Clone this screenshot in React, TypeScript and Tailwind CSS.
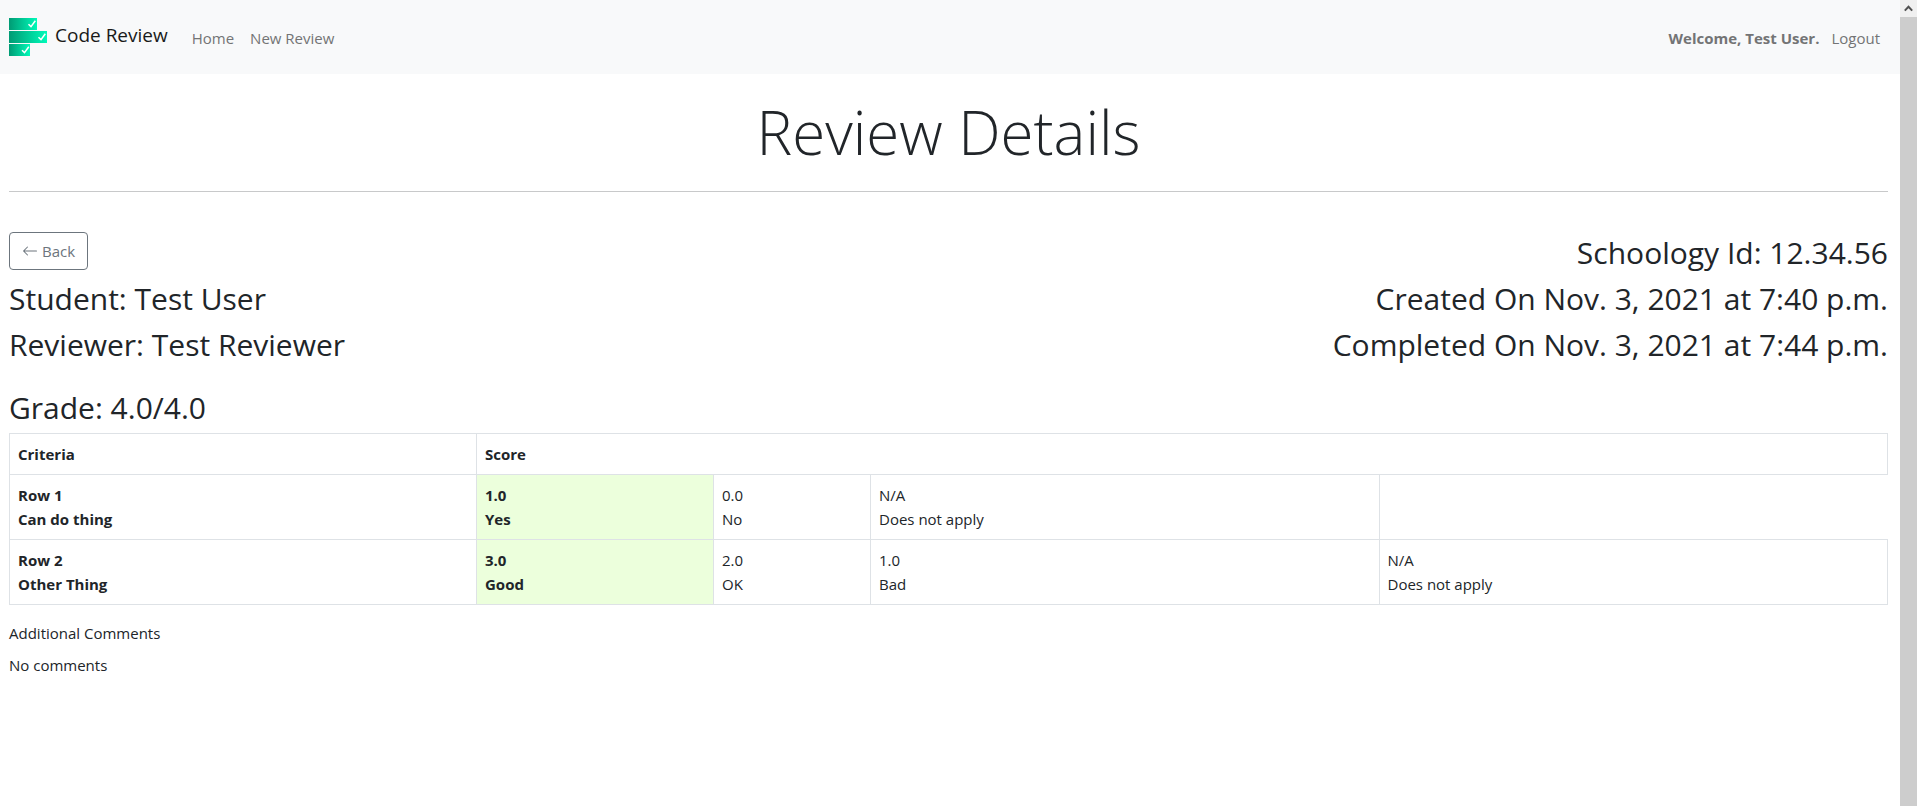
import type { ReactNode } from "react";

type Score = { points: string; label: string; selected?: boolean };
type Criterion = { name: string; description: string; scores: Score[] };

const criteria: Criterion[] = [
  {
    name: "Row 1",
    description: "Can do thing",
    scores: [
      { points: "1.0", label: "Yes", selected: true },
      { points: "0.0", label: "No" },
      { points: "N/A", label: "Does not apply" },
    ],
  },
  {
    name: "Row 2",
    description: "Other Thing",
    scores: [
      { points: "3.0", label: "Good", selected: true },
      { points: "2.0", label: "OK" },
      { points: "1.0", label: "Bad" },
      { points: "N/A", label: "Does not apply" },
    ],
  },
];

function Logo() {
  return (
    <svg width="38" height="38" viewBox="0 0 38 38" aria-hidden="true">
      <defs>
        <linearGradient id="bar" x1="0" y1="0" x2="1" y2="0">
          <stop offset="0" stopColor="#009b74" />
          <stop offset="1" stopColor="#00fab9" />
        </linearGradient>
      </defs>
      <rect x="0" y="0" width="28" height="12" fill="url(#bar)" />
      <rect x="0" y="13" width="38" height="12" fill="url(#bar)" />
      <rect x="0" y="26" width="21" height="12" fill="url(#bar)" />
      <g fill="none" stroke="#fff" strokeWidth="1.5">
        <path d="M19.5 6.2 22 8.6 26.3 2.8" />
        <path d="M29.5 19.2 32 21.6 36.3 15.8" />
        <path d="M13 32.2 15.5 34.6 19.8 28.8" />
      </g>
    </svg>
  );
}

function Heading({ children }: { children: ReactNode }) {
  return <h2 className="pb-1.5 pt-0.5 text-[30px] leading-[38px]">{children}</h2>;
}

function ScrollRail() {
  return (
    <div className="sticky top-0 flex h-screen w-[17px] shrink-0 flex-col bg-[#f0f0f0]" aria-hidden="true">
      <div className="flex h-[17px] items-center justify-center">
        <svg width="9" height="7" viewBox="0 0 9 7">
          <path d="M0.8 5.6 4.5 1.8 8.2 5.6" fill="none" stroke="#505050" strokeWidth="2" />
        </svg>
      </div>
      <div className="flex-1 bg-[#cdcdcd]" />
    </div>
  );
}

export default function App() {
  return (
    <div className="flex min-h-screen bg-white font-['Open_Sans','Noto_Sans',sans-serif] text-[15px] leading-6 text-[#212529]">
      <div className="min-w-0 flex-1">
        <nav className="flex h-[74px] items-center bg-[#f8f9fa] pl-[9px] pr-5 text-[#737475]">
          <a href="#" className="mr-6 flex items-center gap-2 text-[19px] text-[#191919]">
            <Logo />
            <span className="pb-1">Code Review</span>
          </a>
          <div className="flex flex-1 items-center gap-4 pt-0.5">
            <a href="#home">Home</a>
            <a href="#new">New Review</a>
            <strong className="ml-auto">Welcome, Test User.</strong>
            <a href="#logout" className="-ml-1">Logout</a>
          </div>
        </nav>

        <main className="pl-[9px] pr-3">
          <h1 className="border-b border-[#c8c9ca] pb-5 pt-5 text-center text-[60px] font-light leading-[77px]">
            Review Details
          </h1>

          <header className="mt-10 flex justify-between">
            <div className="flex flex-col items-start">
              <button
                type="button"
                className="mb-2 flex h-[38px] items-center gap-1 rounded border border-[#6c757d] px-3 text-[#6c757d]"
              >
                <svg width="16" height="16" viewBox="0 0 16 16" fill="currentColor" aria-hidden="true">
                  <path
                    fillRule="evenodd"
                    d="M15 8a.5.5 0 0 0-.5-.5H2.707l3.147-3.146a.5.5 0 1 0-.708-.708l-4 4a.5.5 0 0 0 0 .708l4 4a.5.5 0 0 0 .708-.708L2.707 8.5H14.5A.5.5 0 0 0 15 8z"
                  />
                </svg>
                Back
              </button>
              <Heading>Student: Test User</Heading>
              <Heading>Reviewer: Test Reviewer</Heading>
            </div>
            <div className="flex flex-col items-end">
              <Heading>Schoology Id: 12.34.56</Heading>
              <Heading>Created On Nov. 3, 2021 at 7:40 p.m.</Heading>
              <Heading>Completed On Nov. 3, 2021 at 7:44 p.m.</Heading>
            </div>
          </header>

          <section className="mt-[17px]">
            <Heading>Grade: 4.0/4.0</Heading>
            <table className="w-full table-fixed border-collapse text-left align-top">
              <colgroup>
                <col className="w-[467px]" />
                <col className="w-[237px]" />
                <col className="w-[157px]" />
                <col />
                <col />
              </colgroup>
              <thead>
                <tr>
                  <th className="border border-[#dee2e6] p-2">Criteria</th>
                  <th colSpan={4} className="border border-[#dee2e6] p-2">Score</th>
                </tr>
              </thead>
              <tbody>
                {criteria.map((row) => (
                  <tr key={row.name}>
                    <th scope="row" className="border border-[#dee2e6] p-2">
                      {row.name}
                      <br />
                      {row.description}
                    </th>
                    {row.scores.map((score) => (
                      <td
                        key={score.label}
                        className={
                          score.selected
                            ? "border border-[#dee2e6] bg-[#ecffdc] p-2 font-bold"
                            : "border border-[#dee2e6] p-2"
                        }
                      >
                        {score.points}
                        <br />
                        {score.label}
                      </td>
                    ))}
                  </tr>
                ))}
              </tbody>
            </table>
          </section>

          <section className="mt-4 flex flex-col gap-2 pb-4">
            <p>Additional Comments</p>
            <p>No comments</p>
          </section>
        </main>
      </div>
      <ScrollRail />
    </div>
  );
}
